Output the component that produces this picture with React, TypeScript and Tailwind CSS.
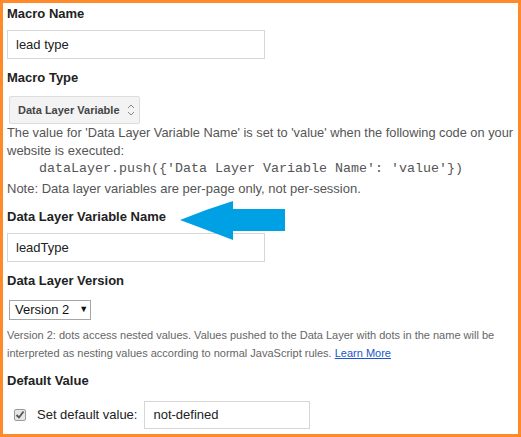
import React from "react";

const arial = { fontFamily: '"Liberation Sans", Arial, sans-serif' };

function Heading({ children, className = "" }: { children: React.ReactNode; className?: string }) {
  return (
    <div className={`text-[13px] leading-[16px] font-bold text-[#222] ${className}`}>{children}</div>
  );
}

export default function App() {
  return (
    <div
      className="relative w-[521px] h-[437px] box-border border-[3px] border-[#ff8a2a] bg-white overflow-hidden"
      style={arial}
    >
      <div className="pl-[4px] pt-[3px]">
        <Heading>Macro Name</Heading>
        <div className="mt-[8px] w-[258px] h-[29px] border border-[#d6d6d6] flex items-center pl-[8px] text-[13px] text-[#222]">
          lead type
        </div>
        <Heading className="mt-[11px]">Macro Type</Heading>
        <div className="mt-[10px] ml-[2px] w-[131px] h-[28px] border border-[#dcdcdc] rounded-[2px] bg-[#f3f3f3] flex items-center pl-[8px] text-[11px] font-bold text-[#444]">
          <span>Data Layer Variable</span>
          <svg width="8" height="14" viewBox="0 0 8 14" className="ml-[7px]">
            <path d="M1 5 L4 2 L7 5" fill="none" stroke="#888" strokeWidth="1" />
            <path d="M1 9 L4 12 L7 9" fill="none" stroke="#888" strokeWidth="1" />
          </svg>
        </div>
        <div className="text-[13px] leading-[18px] text-[#555] whitespace-nowrap">
          <div className="text-[12.8px]">The value for 'Data Layer Variable Name' is set to 'value' when the following code on your</div>
          <div>website is executed:</div>
          <div
            className="pl-[32px] text-[13.33px] leading-[18px] text-[#555]"
            style={{ fontFamily: '"Liberation Mono", "Courier New", monospace' }}
          >
            dataLayer.push({"{"}'Data Layer Variable Name': 'value'{"}"})
          </div>
          <div className="mt-[2px]">Note: Data layer variables are per-page only, not per-session.</div>
        </div>
        <Heading className="mt-[11px]">Data Layer Variable Name</Heading>
        <div className="mt-[8px] w-[258px] h-[29px] border border-[#d6d6d6] flex items-center pl-[8px] text-[13px] text-[#222]">
          leadType
        </div>
        <Heading className="mt-[11px]">Data Layer Version</Heading>
        <div className="mt-[11px] ml-[2px] w-[82px] h-[20px] border border-[#a6a6a6] bg-white flex items-center pl-[5px] text-[13px] text-[#111]">
          <span>Version 2</span>
          <span className="ml-[10px] text-[9px] text-[#111]">▼</span>
        </div>
        <div className="mt-[6px] text-[11px] leading-[18px] text-[#666] whitespace-nowrap">
          <div>Version 2: dots access nested values. Values pushed to the Data Layer with dots in the name will be</div>
          <div>
            interpreted as nesting values according to normal JavaScript rules.{" "}
            <span className="text-[#1a55cc] underline">Learn More</span>
          </div>
        </div>
        <Heading className="mt-[11px]">Default Value</Heading>
        <div className="mt-[12px] flex items-center h-[28px]">
          <div className="ml-[7px] w-[12px] h-[12px] border border-[#9a9a9a] rounded-[2px] bg-[#e6e6e6] flex items-center justify-center">
            <svg width="10" height="10" viewBox="0 0 10 10">
              <path d="M1.5 5 L4 7.5 L8.5 1.5" fill="none" stroke="#555" strokeWidth="1.8" />
            </svg>
          </div>
          <span className="ml-[11px] text-[13px] text-[#222]">Set default value:</span>
          <div className="ml-[7px] w-[166px] h-[28px] border border-[#d6d6d6] flex items-center pl-[8px] text-[13px] text-[#222]">
            not-defined
          </div>
        </div>
      </div>
      <svg
        className="absolute left-[174px] top-[195px]"
        width="112"
        height="46"
        viewBox="174 195 112 46"
      >
        <path
          d="M177 217 Q204 206 230 198 L230 206 L282 206 L282 228 L230 228 L230 237 Q204 227 177 217 Z"
          fill="#00a0e4"
        />
      </svg>
    </div>
  );
}
